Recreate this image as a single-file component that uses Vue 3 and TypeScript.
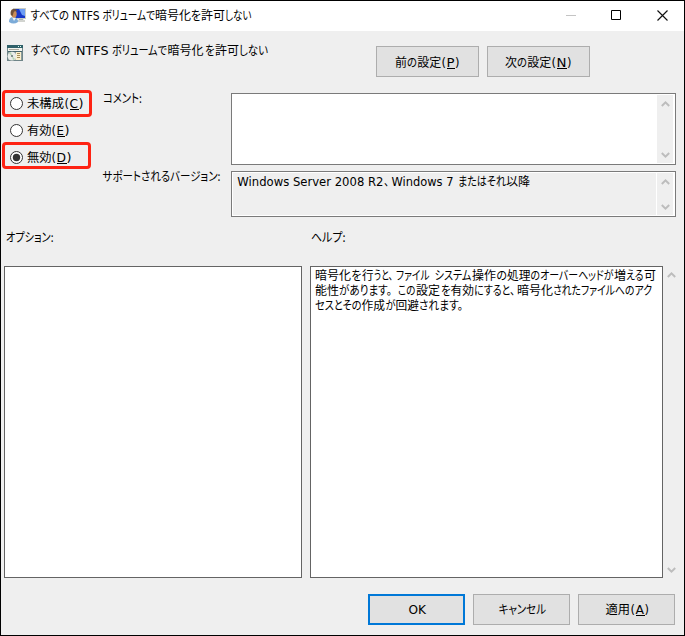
<script setup lang="ts">
import { h } from 'vue'

type Kind = 'k' | 'n' | 'l' | 'u'
// text, left edge, right edge, kind (k: kanji, n: kana, l: latin, u: access key)
type Run = [string, number, number, Kind]

const UiText = (props: { runs: Run[] }) => {
  const runs = props.runs
  const start = Math.floor(runs[0][1])
  const width = Math.ceil(runs[runs.length - 1][2]) - start
  const spans = runs.map(([text, a, b, kind]) =>
    h('tspan', {
      x: a - start,
      y: kind === 'n' ? 12.4 : 12,
      textLength: b - a,
      lengthAdjust: 'spacingAndGlyphs',
      class: 'run-' + kind,
    }, text))
  const underlines = runs.filter((r) => r[3] === 'u').map(([, a, b]) =>
    h('rect', { x: Math.round(a - start), y: 13, width: Math.round(b - a), height: 1 }))
  return h('svg', { class: 'ui-text', width, height: 15 }, [h('text', { y: 12 }, spans), ...underlines])
}
UiText.props = ['runs']

const titleRuns: Run[] = [
  ['すべての', 30.5, 69, 'n'], ['NTFS', 72, 99.5, 'l'], ['ボリュームで', 102.5, 155, 'n'],
  ['暗号化', 155, 191, 'k'], ['を', 191, 201, 'n'], ['許可', 201, 225, 'k'], ['しない', 225, 251.5, 'n'],
]
const headingRuns: Run[] = [
  ['すべての', 31, 70, 'n'], ['NTFS', 76, 108.5, 'l'], ['ボリュームで', 112, 167, 'n'],
  ['暗号化', 167.5, 203.5, 'k'], ['を', 205, 214.5, 'n'], ['許可', 215, 239, 'k'], ['しない', 239, 268, 'n'],
]
const prevRuns: Run[] = [
  ['前', 395, 407, 'k'], ['の', 407, 417, 'n'], ['設定', 417.3, 441.3, 'k'], ['(', 441.5, 446, 'l'], ['P', 446.5, 454.5, 'u'], [')', 455, 459.5, 'l'],
]
const nextRuns: Run[] = [
  ['次', 505, 517, 'k'], ['の', 517, 527, 'n'], ['設定', 527.3, 551.3, 'k'], ['(', 551.5, 556, 'l'], ['N', 556.5, 566.5, 'u'], [')', 567, 571.5, 'l'],
]
const commentRuns: Run[] = [['コメント:', 103, 142, 'n']]
const supportedRuns: Run[] = [['サポートされるバージョン:', 102.5, 220.5, 'n']]
const versionRuns: Run[] = [
  ['Windows Server 2008 R2', 237.3, 383.5, 'l'], ['、', 384, 389, 'n'], ['Windows 7', 391.5, 453.5, 'l'],
  ['またはそれ', 458, 506, 'n'], ['以降', 506, 530, 'k'],
]
const optionsRuns: Run[] = [['オプション:', 6, 53.5, 'n']]
const helpTitleRuns: Run[] = [['ヘルプ:', 311, 345.5, 'n']]
const helpLines: Run[][] = [
  [
    ['暗号化', 315, 351, 'k'], ['を', 351.5, 361.5, 'n'], ['行', 362, 373.5, 'k'], ['うと、', 374, 393, 'n'],
    ['ファイル', 396, 429.5, 'n'], ['システム', 434.5, 471.5, 'n'], ['操作', 472, 496, 'k'], ['の', 496.5, 507, 'n'],
    ['処理', 507, 530.5, 'k'], ['のオーバーヘッドが', 530.5, 613.5, 'n'], ['増', 614, 626, 'k'], ['える', 626, 643.5, 'n'], ['可', 644, 656, 'k'],
  ],
  [
    ['能性', 315, 339, 'k'], ['があります。', 339, 392, 'n'], ['この', 398, 415.5, 'n'], ['設定', 416, 440, 'k'],
    ['を', 441, 450.5, 'n'], ['有効', 450.5, 474, 'k'], ['にすると、', 474, 515, 'n'], ['暗号化', 517, 553, 'k'],
    ['されたファイルへのアク', 553, 652, 'n'],
  ],
  [
    ['セスとその', 315, 361.5, 'n'], ['作成', 361.5, 385, 'k'], ['が', 385.5, 395.5, 'n'], ['回避', 395.5, 419, 'k'], ['されます。', 419, 463, 'n'],
  ],
]
const choices: { id: string; marked: boolean; checked: boolean; runs: Run[] }[] = [
  { id: 'c', marked: true, checked: false, runs: [['未構成', 27, 64, 'k'], ['(', 64.5, 69, 'l'], ['C', 69.5, 78, 'u'], [')', 78.5, 83.5, 'l']] },
  { id: 'e', marked: false, checked: false, runs: [['有効', 27, 51.5, 'k'], ['(', 51.5, 56, 'l'], ['E', 56.5, 64, 'u'], [')', 64.5, 69.5, 'l']] },
  { id: 'd', marked: true, checked: true, runs: [['無効', 27, 51.5, 'k'], ['(', 51.5, 56, 'l'], ['D', 56.5, 66, 'u'], [')', 66.5, 71.5, 'l']] },
]
const okRuns: Run[] = [['OK', 407.5, 425, 'l']]
const cancelRuns: Run[] = [['キャンセル', 497.5, 545, 'n']]
const applyRuns: Run[] = [['適用', 604.5, 629, 'k'], ['(', 629.5, 634, 'l'], ['A', 634.5, 643, 'u'], [')', 643.5, 648, 'l']]
</script>

<template>
  <div class="window">
    <header class="titlebar">
      <svg class="app-icon" width="17" height="16" viewBox="0 0 17 16">
        <rect x="4" y="0" width="13" height="11" fill="#c9ccc4" />
        <rect x="5" y="1" width="11" height="9" fill="#1737c8" />
        <path d="M10 1h6v7l-3-1z" fill="#6d9df4" />
        <path d="M10 11h4l1 2H9z" fill="#aeb3b5" />
        <rect x="8" y="12" width="8" height="2" fill="#d2d4d0" />
        <path d="M0 14c0-4 2-5 4-5s5 1 5 5c-3 2-6 2-9 0z" fill="#7cabd8" />
        <path d="M3 9l2 4 2-3z" fill="#e7f2fa" />
        <ellipse cx="5" cy="6" rx="2.7" ry="3.7" fill="#c98c56" />
        <path d="M1.8 7C1 2 3 1 5 1s3 1 3 2L5 3.5 3.5 8z" fill="#705038" />
      </svg>
      <UiText class="title" :runs="titleRuns" />
      <div class="controls">
        <svg width="10" height="11" viewBox="0 0 10 11"><path d="M0 5.5h10" stroke="#c4c4c4" /></svg>
        <svg width="10" height="11" viewBox="0 0 10 11"><path d="M.5.5h9v9h-9z" fill="none" stroke="#000" /></svg>
        <svg width="11" height="11" viewBox="0 0 11 11"><path d="M.5.5l10 10M10.5.5l-10 10" stroke="#111" stroke-width="1.15" /></svg>
      </div>
    </header>

    <section class="heading">
      <svg class="policy-icon" width="16" height="16" viewBox="0 0 16 16">
        <rect width="16" height="16" fill="#6f8588" />
        <rect width="16" height="3" fill="#2f6069" />
        <path d="M11 1h1v1h-1zM13 1h1v1h-1z" fill="#dfe" />
        <rect x="1" y="3" width="14" height="3" fill="#f2f3ee" />
        <path d="M2 4h10v1H2z" fill="#a9a79c" />
        <rect x="1" y="6" width="14" height="1" fill="#46646b" />
        <rect x="1" y="7" width="14" height="8" fill="#8d9c9d" />
        <circle cx="5" cy="11.2" r="4.4" fill="#e9ece8" />
        <path d="M5 11L2 8.5 4 7zM5 11l3 3-2 1z" fill="#b3d3b0" />
        <circle cx="5" cy="11" r="1.1" fill="#6c7e7a" />
        <path d="M9 7h5v8H8.500v-2H9z" fill="#fbf0cd" />
        <path d="M10 8.500h3M10 10.500h3M10 12.500h3" stroke="#a58e5c" />
      </svg>
      <UiText class="heading-text" :runs="headingRuns" />
      <div class="nav">
        <button class="btn nav-btn"><UiText :runs="prevRuns" /></button>
        <button class="btn nav-btn"><UiText :runs="nextRuns" /></button>
      </div>
    </section>

    <section class="settings">
      <div class="choices">
        <div v-for="c in choices" :key="c.id" class="choice" :class="['choice-' + c.id, { marked: c.marked }]">
          <svg class="radio" width="13" height="13" viewBox="0 0 13 13">
            <circle cx="6.5" cy="6.5" r="6" fill="#fff" stroke="#333" />
            <circle v-if="c.checked" cx="6.5" cy="6.5" r="3.7" fill="#333" />
          </svg>
          <UiText :runs="c.runs" />
        </div>
      </div>
      <div class="labels">
        <UiText class="comment-label" :runs="commentRuns" />
        <UiText :runs="supportedRuns" />
      </div>
      <div class="fields">
        <div class="field comment">
          <div class="field-text"></div>
          <div class="scroll">
            <svg width="9" height="6" viewBox="0 0 9 6"><path d="M.8 5L4.5 1.4 8.2 5" /></svg>
            <svg width="9" height="6" viewBox="0 0 9 6"><path d="M.8 1L4.5 4.6 8.2 1" /></svg>
          </div>
        </div>
        <div class="field supported">
          <div class="field-text"><UiText :runs="versionRuns" /></div>
          <div class="scroll">
            <svg width="9" height="6" viewBox="0 0 9 6"><path d="M.8 5L4.5 1.4 8.2 5" /></svg>
            <svg width="9" height="6" viewBox="0 0 9 6"><path d="M.8 1L4.5 4.6 8.2 1" /></svg>
          </div>
        </div>
      </div>
    </section>

    <section class="panel-titles">
      <UiText :runs="optionsRuns" />
      <UiText :runs="helpTitleRuns" />
    </section>

    <section class="panels">
      <div class="panel"></div>
      <div class="panel help"><UiText v-for="(line, i) in helpLines" :key="i" :runs="line" /></div>
      <div class="scroll outer">
        <svg width="9" height="6" viewBox="0 0 9 6"><path d="M.8 5L4.5 1.4 8.2 5" /></svg>
        <svg width="9" height="6" viewBox="0 0 9 6"><path d="M.8 1L4.5 4.6 8.2 1" /></svg>
      </div>
    </section>

    <footer class="actions">
      <button class="btn primary"><UiText :runs="okRuns" /></button>
      <button class="btn"><UiText :runs="cancelRuns" /></button>
      <button class="btn"><UiText :runs="applyRuns" /></button>
    </footer>
  </div>
</template>

<style>
.ui-text {
  display: block;
  flex: none;
  overflow: visible;
  font-family: "DejaVu Sans", "Noto Sans CJK JP", sans-serif;
  font-size: 12px;
  fill: #000;
}
.ui-text .run-l,
.ui-text .run-u {
  font-size: 11.5px;
}
.ui-text .run-k,
.ui-text .run-n {
  font-family: "Noto Sans CJK JP", sans-serif;
}
.ui-text .run-n {
  font-size: 12.5px;
  font-feature-settings: "palt";
}
</style>

<style scoped>
.window {
  box-sizing: border-box;
  width: 685px;
  height: 636px;
  border: 1px solid #000;
  background: #efefef;
  display: flex;
  flex-direction: column;
  overflow: hidden;
}
.titlebar {
  height: 30px;
  flex: none;
  background: #fff;
  display: flex;
  align-items: flex-start;
  padding: 7px 16px 0 8px;
  box-sizing: border-box;
}
.title {
  margin-left: 4px;
}
.controls {
  margin-left: auto;
  display: flex;
  gap: 35px;
  padding-top: 2px;
}
.controls svg:last-child {
  margin-left: 1px;
}
.heading {
  height: 59px;
  flex: none;
  display: flex;
  align-items: flex-start;
  padding: 12px 0 0 6px;
  box-sizing: border-box;
}
.policy-icon {
  margin-top: 2px;
}
.heading-text {
  margin-left: 8px;
}
.nav {
  display: flex;
  gap: 8px;
  margin: 3px 94px 0 auto;
}
.btn {
  display: flex;
  justify-content: center;
  align-items: flex-start;
  box-sizing: border-box;
  width: 97px;
  height: 31px;
  margin: 0;
  padding: 7px 0 0;
  border: 1px solid #adadad;
  background: #e1e1e1;
}
.nav-btn {
  width: 103px;
  padding-top: 8px;
}
.primary {
  border: 2px solid #0078d7;
  padding-top: 6px;
}
.settings {
  display: grid;
  grid-template-columns: 101px 129px 445px;
  height: 140px;
  flex: none;
}
.choices {
  padding-left: 1px;
}
.choice {
  box-sizing: border-box;
  height: 27px;
  width: 90px;
  display: flex;
  align-items: flex-start;
  gap: 4px;
  padding: 7px 0 0 8px;
}
.radio {
  flex: none;
}
.choice .ui-text {
  margin-top: -1px;
}
.marked {
  border: 3px solid #fe2313;
  border-radius: 4px;
  padding: 4px 0 0 5px;
}
.choice-e {
  height: 25px;
}
.choice-d {
  width: 89px;
  padding-top: 6px;
}
.labels {
  padding-top: 1px;
}
.comment-label {
  margin: 0 0 63px 1px;
}
.fields {
  padding-top: 3px;
}
.field {
  box-sizing: border-box;
  border: 1px solid #7a7a7a;
  display: flex;
  padding: 1px;
  background: #fff;
}
.comment {
  height: 72px;
  margin-bottom: 6px;
}
.supported {
  height: 46px;
}
.field-text {
  flex: 1;
}
.supported .field-text {
  background: #efefef;
  padding: 1px 0 0 4px;
  margin-right: 1px;
}
.scroll {
  width: 16px;
  box-sizing: border-box;
  background: #efefef;
  display: flex;
  flex-direction: column;
  align-items: center;
  justify-content: space-between;
  padding: 6px 0 5px;
}
.field .scroll {
  margin-right: 1px;
}
.scroll path {
  fill: none;
  stroke: #bdbdbd;
  stroke-width: 2;
}
.panel-titles {
  display: grid;
  grid-template-columns: 305px 1fr;
  padding-left: 5px;
  height: 36px;
  flex: none;
}
.panels {
  display: grid;
  grid-template-columns: 298px 353px 16px;
  column-gap: 8px;
  padding-left: 3px;
  height: 312px;
  flex: none;
}
.panel {
  border: 1px solid #646464;
  background: #fff;
}
.help {
  padding: 1px 0 0 4px;
}
.outer {
  margin-left: -8px;
}
.actions {
  display: flex;
  justify-content: flex-end;
  gap: 8px;
  padding: 16px 9px 0 0;
}
</style>
